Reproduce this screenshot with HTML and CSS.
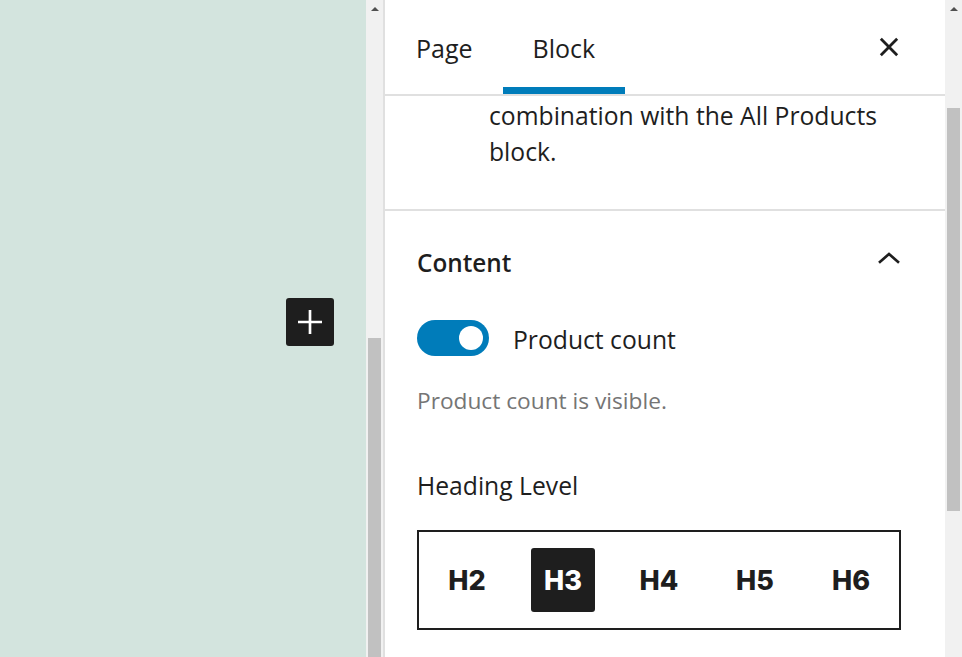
FILE: index.html
```html
<!DOCTYPE html>
<html lang="en">
<head>
<meta charset="utf-8">
<title>Block settings</title>
<link rel="stylesheet" href="styles.css">
</head>
<body>
<div class="app">
  <div class="canvas">
    <button class="inserter" aria-label="Add block">
      <svg viewBox="0 0 24 24" width="24" height="24"><path d="M11 3h2v8h8v2h-8v8h-2v-8H3v-2h8z" fill="#fff"/></svg>
    </button>
  </div>
  <div class="scrollbar left-bar">
    <div class="arrow"></div>
    <div class="track left-track"><div class="thumb"></div></div>
  </div>
  <aside class="sidebar">
    <div class="header">
      <div class="tabs">
        <div class="tab">Page</div>
        <div class="tab active">Block</div>
      </div>
      <button class="close" aria-label="Close">
        <svg viewBox="0 0 24 24" width="24" height="24"><path d="M5 5L19 19M19 5L5 19" stroke="#1e1e1e" stroke-width="2.4"/></svg>
      </button>
    </div>
    <div class="card">
      <p class="desc">combination with the All Products block.</p>
    </div>
    <div class="panel">
      <div class="panel-title">
        <span>Content</span>
        <svg viewBox="0 0 24 24" width="32" height="32"><path d="M4.5 15.5L12 9l7.5 6.5" fill="none" stroke="#1e1e1e" stroke-width="2"/></svg>
      </div>
      <div class="toggle-row">
        <span class="toggle"><span class="knob"></span></span>
        <span class="toggle-label">Product count</span>
      </div>
      <p class="help">Product count is visible.</p>
      <p class="field-label">Heading Level</p>
      <div class="levels">
        <span class="level">H2</span>
        <span class="level selected">H3</span>
        <span class="level">H4</span>
        <span class="level">H5</span>
        <span class="level">H6</span>
      </div>
    </div>
  </aside>
  <div class="scrollbar right-bar">
    <div class="arrow"></div>
    <div class="track right-track"><div class="thumb"></div></div>
  </div>
</div>
</body>
</html>
```

FILE: styles.css
```css
* { box-sizing: border-box; }
html, body { margin: 0; padding: 0; }
body {
  width: 962px;
  height: 657px;
  overflow: hidden;
  font-family: "Open Sans", "Noto Sans", sans-serif;
  color: #1e1e1e;
  background: #fff;
}
.app {
  display: flex;
  height: 657px;
}
.canvas {
  width: 366px;
  background: #d3e4de;
  display: flex;
  flex-direction: column;
  align-items: flex-end;
  padding: 298px 32px 0 0;
}
.inserter {
  width: 48px;
  height: 48px;
  border: 0;
  border-radius: 3px;
  background: #1e1e1e;
  display: flex;
  align-items: center;
  justify-content: center;
  padding: 0;
}
.inserter svg { width: 32px; height: 32px; }
.scrollbar {
  width: 17px;
  background: #f1f1f1;
  display: flex;
  flex-direction: column;
}
.left-bar { border-right: 2px solid #e0e0e0; width: 19px; }
.arrow {
  height: 17px;
  display: flex;
  justify-content: center;
  align-items: center;
}
.arrow::before {
  content: "";
  border-left: 4px solid transparent;
  border-right: 4px solid transparent;
  border-bottom: 4px solid #505050;
}
.track { flex: 1; display: flex; flex-direction: column; padding: 0 2px; }
.left-track { padding-top: 321px; }
.left-track .thumb { flex: 1; background: #c1c1c1; }
.right-track { padding-top: 91px; }
.right-track .thumb { height: 403px; background: #c1c1c1; }
.sidebar {
  width: 560px;
  display: flex;
  flex-direction: column;
}
.header {
  height: 96px;
  border-bottom: 2px solid #e0e0e0;
  display: flex;
  justify-content: space-between;
  align-items: stretch;
}
.tabs { display: flex; padding-left: 1px; }
.tab {
  padding: 0 30px;
  font-size: 25px;
  font-weight: 500;
  display: flex;
  align-items: center;
  border-bottom: 7px solid transparent;
  padding-top: 9px;
}
.tab.active { border-bottom-color: #007cba; }
.close {
  border: 0;
  background: none;
  width: 48px;
  height: 48px;
  margin: 23px 32px 0 0;
  padding: 0;
  display: flex;
  align-items: center;
  justify-content: center;
}
.close svg { width: 28px; height: 28px; }
.card {
  padding: 0 32px 0 104px;
  height: 115px;
  border-bottom: 2px solid #e0e0e0;
}
.desc {
  margin: 2px 0 0;
  font-size: 24.7px;
  line-height: 36px;
}
.panel { padding: 0 32px; }
.panel-title {
  height: 104px;
  display: flex;
  align-items: center;
  justify-content: space-between;
  font-size: 24.3px;
  font-weight: 600;
  padding-bottom: 2px;
}
.panel-title svg { margin-right: 8px; margin-top: -8px; }
.toggle-row {
  display: flex;
  align-items: center;
  gap: 24px;
  margin-top: 5px;
}
.toggle {
  width: 72px;
  height: 36px;
  border-radius: 18px;
  background: #007cba;
  position: relative;
  flex: none;
}
.knob {
  position: absolute;
  width: 24px;
  height: 24px;
  border-radius: 50%;
  background: #fff;
  top: 6px;
  right: 6px;
}
.toggle-label { font-size: 24.7px; line-height: 36px; position: relative; top: 2px; }
.help {
  margin: 27px 0 0;
  font-size: 22.7px;
  line-height: 36px;
  color: #757575;
}
.field-label {
  margin: 49px 0 0;
  font-size: 24.7px;
  line-height: 36px;
}
.levels {
  margin-top: 26px;
  width: 484px;
  height: 100px;
  border: 2px solid #1e1e1e;
  display: flex;
  align-items: center;
  padding: 0 0 0 16px;
  gap: 32px;
}
.level {
  width: 64px;
  height: 64px;
  border-radius: 3px;
  display: flex;
  align-items: center;
  justify-content: center;
  font-family: "Inter", sans-serif;
  font-weight: 800;
  font-size: 27px;
}
.level.selected { background: #1e1e1e; color: #fff; }
```
